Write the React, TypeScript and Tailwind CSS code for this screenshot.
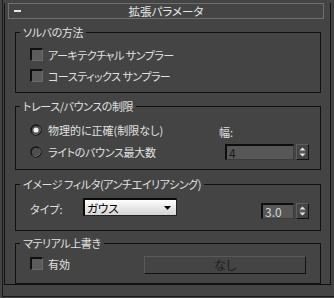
import React from "react";

const font = "font-['Noto_Sans_CJK_JP','Noto_Sans',sans-serif] [font-feature-settings:'palt']";

function Checkbox() {
  return (
    <div className="w-[13px] h-[13px] shrink-0 border-t-2 border-l-2 border-b border-r border-t-[#111] border-l-[#111] border-b-[#6a6a6a] border-r-[#6a6a6a] bg-[#5c5c5c]" />
  );
}

function Radio({ on }: { on: boolean }) {
  return (
    <svg width="12" height="12" viewBox="0 0 12 12" className="shrink-0">
      <circle cx="6" cy="6" r="5" fill="#4e4e4e" stroke="#151515" strokeWidth="1.4" />
      <path d="M2.5 9.5 A5 5 0 0 0 9.5 2.5" fill="none" stroke="#666" strokeWidth="1" />
      {on && <circle cx="6" cy="6" r="2.6" fill="#f2f2f2" />}
    </svg>
  );
}

function Arrows() {
  return (
    <div className="w-[13px] h-[16px] shrink-0 ml-[2px] border-t border-l border-b border-r border-t-[#5e5e5e] border-l-[#5e5e5e] border-b-[#111] border-r-[#111] bg-[#444] flex items-center justify-center">
      <svg width="9" height="12" viewBox="0 0 9 12">
        <path d="M4.5 1.5 L7.5 4.5 L1.5 4.5 Z" fill="#e6e6e6" />
        <rect x="1.5" y="5.5" width="6" height="1" fill="#777" />
        <path d="M1.5 7.5 L7.5 7.5 L4.5 10.5 Z" fill="#e6e6e6" />
      </svg>
    </div>
  );
}

function Legend({ children }: { children: React.ReactNode }) {
  return <legend className="ml-[4px] px-[3px] text-[11px] leading-[14px] tracking-[-0.4px] text-[#e0e0e0]">{children}</legend>;
}

export default function App() {
  return (
    <div className={`w-[334px] h-[298px] bg-[#444444] overflow-hidden pl-[2px] text-[#e0e0e0] text-[11px] ${font}`}>
      <div className="h-[297px] border-l border-b border-[#1a1a1a] pt-[11px] pl-[1px] pr-[3px]">
        <div className="h-[282px] border-l border-r border-b border-[#111]">
          {/* header */}
          <div className="mt-[-8px] ml-[3px] mr-[6px] h-[16px] border border-[#6e6e6e] bg-[#444444] flex items-center">
            <div className="w-[20px] pl-[5px] flex items-center">
              <div className="w-[7px] h-[2px] bg-[#e6e6e6]" />
            </div>
            <div className="flex-1 text-center leading-[14px] text-[11.5px] text-[#e8e8e8]">拡張パラメータ</div>
            <div className="w-[20px]" />
          </div>

          <div className="ml-[10px] w-[306px]">
            {/* group 1 */}
            <fieldset className="mt-[6px] h-[68px] border border-[#111]">
              <Legend>ソルバの方法</Legend>
              <div className="pt-[9px] pl-[14px] flex flex-col gap-[8px]">
                <div className="flex items-center h-[13px] gap-[5px]">
                  <Checkbox />
                  <span className="leading-[14px] tracking-[-0.5px]">アーキテクチャル サンプラー</span>
                </div>
                <div className="flex items-center h-[13px] gap-[5px]">
                  <Checkbox />
                  <span className="leading-[14px] tracking-[-0.5px]">コースティックス サンプラー</span>
                </div>
              </div>
            </fieldset>

            {/* group 2 */}
            <fieldset className="mt-[6px] h-[71px] border border-[#111]">
              <Legend>トレース/バウンスの制限</Legend>
              <div className="pt-[9px] flex flex-col gap-[6px]">
                <div className="flex items-center h-[16px]">
                  <div className="w-[203px] pl-[14px] flex items-center gap-[6px]">
                    <Radio on />
                    <span className="leading-[14px]">物理的に正確(制限なし)</span>
                  </div>
                  <span className="leading-[14px] mt-[4px]">幅:</span>
                </div>
                <div className="flex items-center h-[16px]">
                  <div className="w-[209px] pl-[14px] flex items-center gap-[6px]">
                    <Radio on={false} />
                    <span className="leading-[14px] tracking-[-0.3px]">ライトのバウンス最大数</span>
                  </div>
                  <div className="flex items-start">
                    <div className="w-[69px] h-[16px] bg-[#575757] border-t-2 border-l-2 border-b border-r border-t-[#0e0e0e] border-l-[#0e0e0e] border-b-[#3c3c3c] border-r-[#3c3c3c] flex items-center pl-[2px] text-[12px] leading-none text-[#1c1c1c]">
                      4
                    </div>
                    <Arrows />
                  </div>
                </div>
              </div>
            </fieldset>

            {/* group 3 */}
            <fieldset className="mt-[7px] h-[54px] border border-[#111]">
              <Legend>イメージ フィルタ(アンチエイリアシング)</Legend>
              <div className="flex items-start">
                <span className="ml-[14px] mt-[11px] w-[53px] leading-[14px]">タイプ:</span>
                <div className="mt-[7px] w-[94px] h-[18px] border-t-2 border-l-2 border-b border-r border-t-[#0a0a0a] border-l-[#0a0a0a] border-b-[#222] border-r-[#222] bg-gradient-to-b from-[#ffffff] to-[#d4d4d4] flex items-center justify-between pl-[2px] pr-[5px]">
                  <span className="text-[#000] leading-[14px] text-[11.5px]">ガウス</span>
                  <svg width="7" height="4" viewBox="0 0 7 4">
                    <path d="M0 0 L7 0 L3.5 4 Z" fill="#000" />
                  </svg>
                </div>
                <div className="ml-[84px] mt-[12px] flex items-start">
                  <div className="w-[33px] h-[16px] bg-[#575757] border-t-2 border-l-2 border-b border-r border-t-[#0e0e0e] border-l-[#0e0e0e] border-b-[#3c3c3c] border-r-[#3c3c3c] flex items-center pl-[2px] text-[12px] leading-none text-[#d6d6d6]">
                    3.0
                  </div>
                  <Arrows />
                </div>
              </div>
            </fieldset>

            {/* group 4 */}
            <fieldset className="mt-[5px] h-[48px] border border-[#111]">
              <Legend>マテリアル上書き</Legend>
              <div className="flex items-start">
                <div className="ml-[14px] mt-[7px] w-[114px] flex items-center h-[13px] gap-[5px]">
                  <Checkbox />
                  <span className="leading-[14px]">有効</span>
                </div>
                <div className="mt-[6px] w-[162px] h-[18px] border-t border-l border-b border-r border-t-[#5a5a5a] border-l-[#5a5a5a] border-b-[#111] border-r-[#111] bg-[#444] flex items-center justify-center text-[#1e1e1e] leading-[14px] text-[12px]">
                  なし
                </div>
              </div>
            </fieldset>
          </div>
        </div>
      </div>
    </div>
  );
}
